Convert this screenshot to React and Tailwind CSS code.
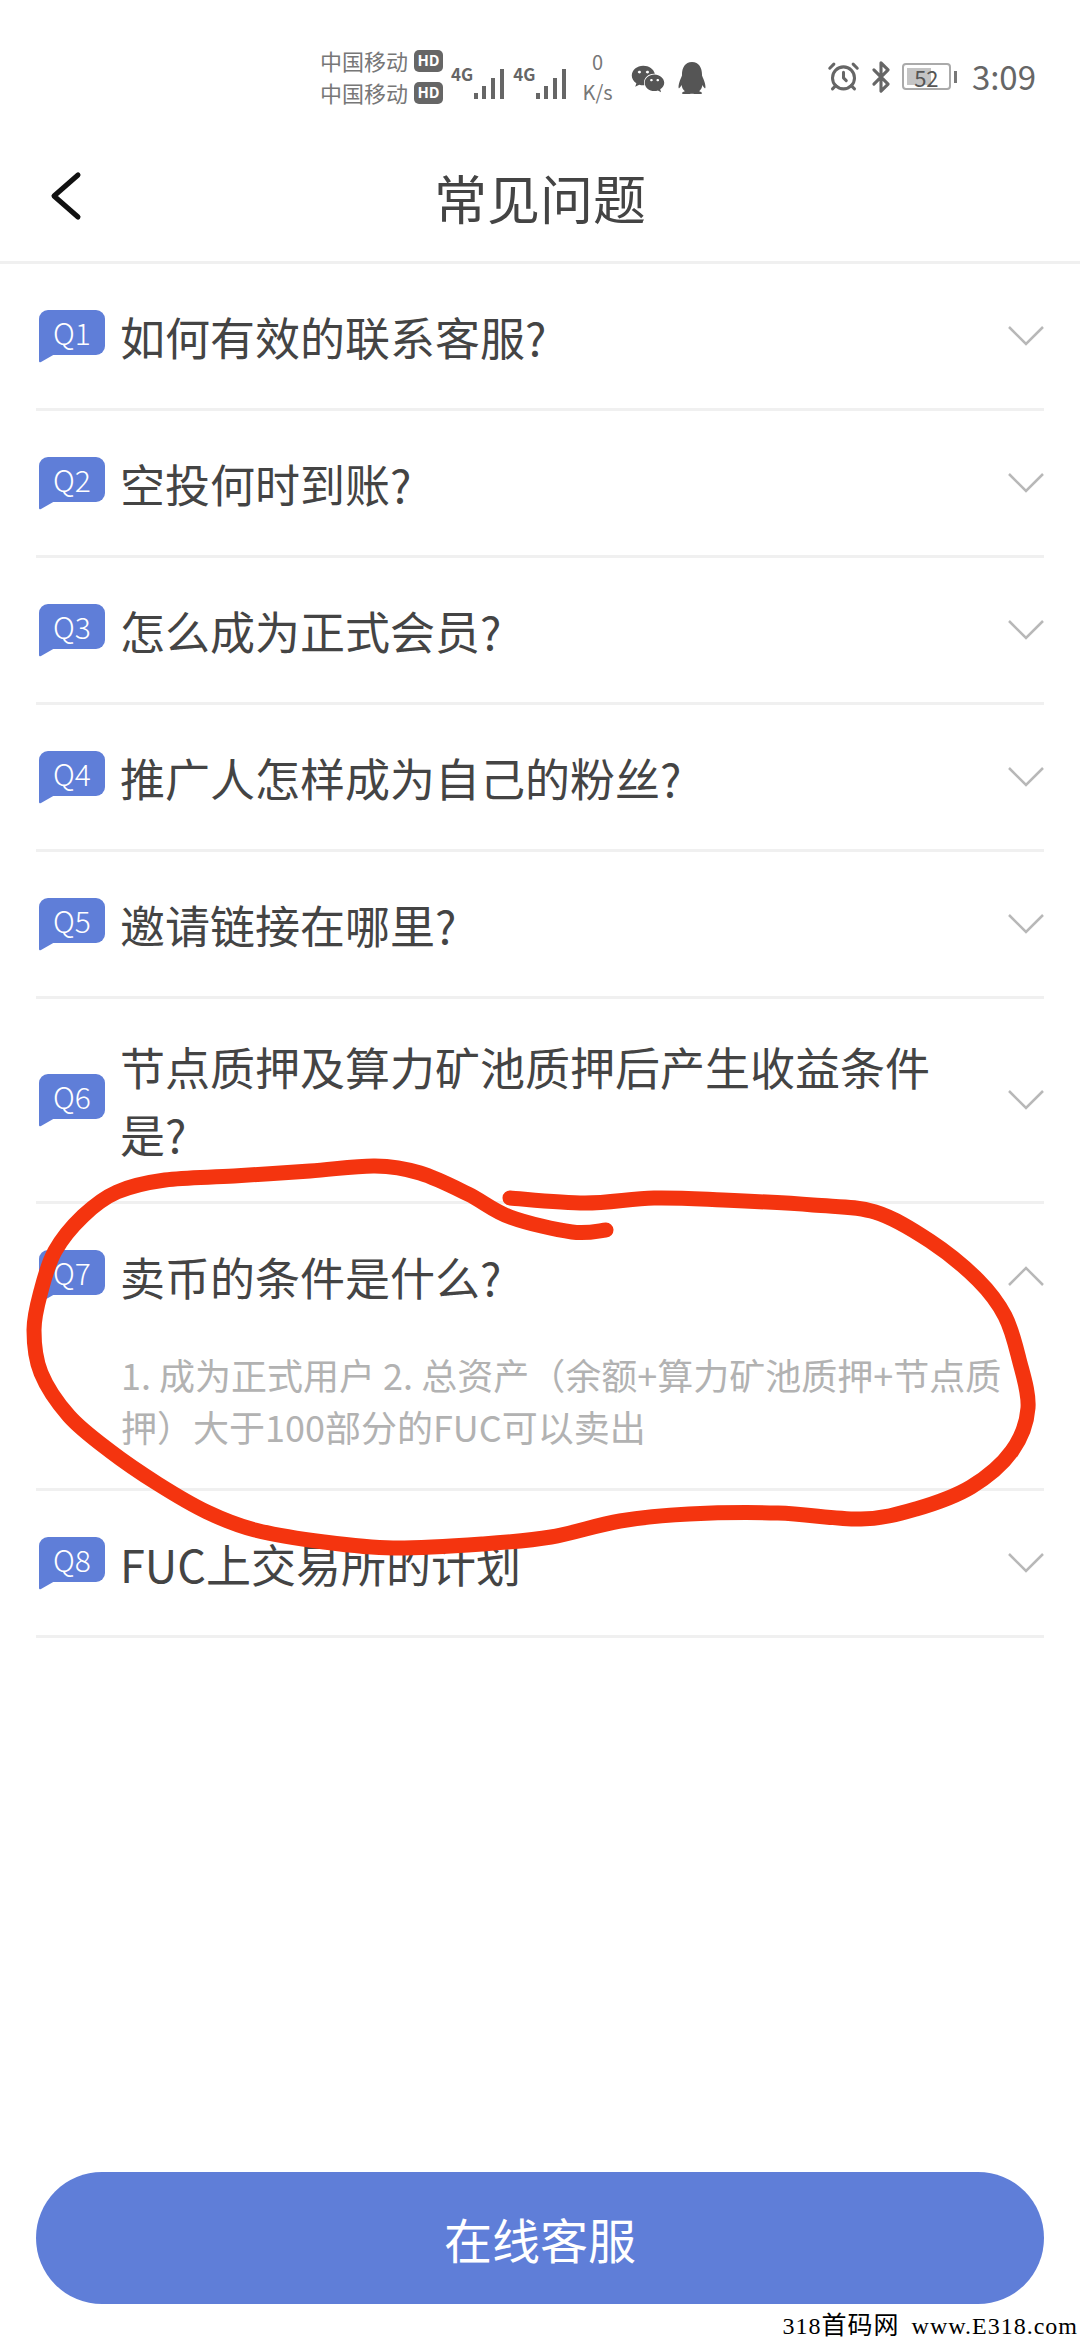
import React from 'react';
import { AlarmClock, Bluetooth } from 'lucide-react';
import { FaQq, FaWeixin } from 'react-icons/fa';

const faqs = [
  { id: 'Q1', title: '如何有效的联系客服?' },
  { id: 'Q2', title: '空投何时到账?' },
  { id: 'Q3', title: '怎么成为正式会员?' },
  { id: 'Q4', title: '推广人怎样成为自己的粉丝?' },
  { id: 'Q5', title: '邀请链接在哪里?' },
  { id: 'Q6', title: '节点质押及算力矿池质押后产生收益条件是?', tall: true },
  {
    id: 'Q7',
    title: '卖币的条件是什么?',
    answer: '1. 成为正式用户 2. 总资产（余额+算力矿池质押+节点质押）大于100部分的FUC可以卖出',
  },
  { id: 'Q8', title: 'FUC上交易所的计划' },
];

// hand drawn circle, traced from the screenshot
const scribble = [
  [606, 1230], [572, 1232], [510, 1217], [468, 1194], [420, 1173], [375, 1166], [310, 1171],
  [234, 1176], [165, 1180], [117, 1192], [83, 1216], [55, 1251], [41, 1291], [34, 1330],
  [41, 1373], [69, 1416], [110, 1451], [158, 1484], [207, 1512], [255, 1530], [324, 1542],
  [393, 1548], [482, 1544], [551, 1537], [620, 1521], [689, 1514], [778, 1513], [861, 1519],
  [916, 1509], [971, 1487], [1012, 1451], [1028, 1408], [1019, 1359], [1005, 1316], [978, 1280],
  [930, 1241], [875, 1212], [813, 1205], [723, 1200], [654, 1198], [585, 1203], [510, 1198],
];

const smoothPath = (pts) => {
  let d = `M${pts[0][0]} ${pts[0][1]}`;
  for (let i = 0; i < pts.length - 1; i++) {
    const p0 = pts[i - 1] || pts[i];
    const p1 = pts[i];
    const p2 = pts[i + 1];
    const p3 = pts[i + 2] || p2;
    d += ` C${p1[0] + (p2[0] - p0[0]) / 6} ${p1[1] + (p2[1] - p0[1]) / 6} ${p2[0] - (p3[0] - p1[0]) / 6} ${p2[1] - (p3[1] - p1[1]) / 6} ${p2[0]} ${p2[1]}`;
  }
  return d;
};

const SignalBars = () => (
  <svg width="30" height="32" viewBox="0 0 30 32" fill="#666">
    <rect x="0" y="25" width="4" height="6" />
    <rect x="8" y="18" width="4" height="13" />
    <rect x="17" y="10" width="4" height="21" />
    <rect x="26" y="1" width="4" height="30" />
  </svg>
);

const Carrier = () => (
  <div className="flex items-center gap-[6px] h-[32px]">
    <span className="text-[22px] text-[#777]">中国移动</span>
    <span className="w-[29px] h-[22px] rounded-[5px] bg-[#666] text-white text-[15px] font-bold flex items-center justify-center">HD</span>
  </div>
);

const StatusBar = () => (
  <div className="h-[131px] flex items-center pl-[320px] pr-[44px] pt-[22px] text-[#666]">
    <div className="flex flex-col">
      <Carrier />
      <Carrier />
    </div>
    <div className="flex items-end ml-[8px] mt-[8px]">
      <span className="text-[17px] font-bold mb-[14px] mr-[1px]">4G</span>
      <SignalBars />
      <span className="text-[17px] font-bold mb-[14px] ml-[9px] mr-[1px]">4G</span>
      <SignalBars />
    </div>
    <div className="flex flex-col items-center ml-[16px] text-[20px] leading-[30px] text-[#777]">
      <span>0</span>
      <span>K/s</span>
    </div>
    <FaWeixin className="ml-[18px] mt-[4px]" size={34} color="#555" />
    <FaQq className="ml-[11px] mt-[2px]" size={32} color="#555" />
    <AlarmClock className="ml-auto" size={33} strokeWidth={2.2} color="#666" />
    <Bluetooth className="ml-[4px]" size={34} strokeWidth={2.2} color="#666" />
    <div className="ml-[4px] flex items-center">
      <div className="relative w-[49px] h-[27px] border-2 border-[#aaa] rounded-[4px] flex items-center justify-center text-[22px] leading-none text-[#555]">
        <div className="absolute left-[3px] top-[3px] bottom-[3px] w-[24px] bg-[#c4c4c4]" />
        <span className="relative">52</span>
      </div>
      <div className="w-[3px] h-[12px] bg-[#777] ml-[3px]" />
    </div>
    <span className="ml-[15px] text-[33px] text-[#666]">3:09</span>
  </div>
);

const Badge = ({ id }) => (
  <div className="relative shrink-0 w-[66px] h-[45px] ml-[3px] mb-[8px] bg-[#5f7ed8] rounded-[9px] rounded-bl-none flex items-center justify-center text-white text-[30px] font-light">
    {id}
    <svg className="absolute left-0 top-[44px]" width="16" height="9" viewBox="0 0 16 9" fill="#5f7ed8">
      <path d="M0 0H16L2 8Q0 9 0 7Z" />
    </svg>
  </div>
);

const Chevron = ({ up }) => (
  <svg className="shrink-0 ml-auto" width="36" height="20" viewBox="0 0 36 20" fill="none" stroke="#b8b8b8" strokeWidth="2.5">
    <path d={up ? 'M1 19L18 2L35 19' : 'M1 1L18 18L35 1'} />
  </svg>
);

const FaqRow = ({ faq }) => {
  const open = !!faq.answer;
  return (
    <div className="border-b-[3px] border-[#f0f0f0]">
      <div className={`flex items-center ${faq.tall ? 'h-[202px]' : 'h-[144px]'}`}>
        <Badge id={faq.id} />
        <div className="w-[845px] ml-[15px] text-[45px] leading-[67px] text-[#444]">{faq.title}</div>
        <Chevron up={open} />
      </div>
      {open && (
        <div className="ml-[85px] w-[890px] pb-[36px] text-[36px] leading-[52px] text-[#b2b2b2]">
          {faq.answer}
        </div>
      )}
    </div>
  );
};

const App = () => {
  return (
    <div className="relative w-[1080px] h-[2340px] bg-white flex flex-col overflow-hidden font-['Noto_Sans_CJK_SC','Noto_Sans',sans-serif]">
      <StatusBar />

      <div className="relative h-[133px] border-b-[3px] border-[#f0f0f0] flex items-center justify-center">
        <svg className="absolute left-[48px] top-[40px]" width="36" height="50" viewBox="0 0 36 50" fill="none" stroke="#111" strokeWidth="5" strokeLinecap="round" strokeLinejoin="round">
          <path d="M30 4L6 25L30 46" />
        </svg>
        <h1 className="text-[53px] text-[#444] mt-[3px]">常见问题</h1>
      </div>

      <div className="mx-[36px] flex flex-col">
        {faqs.map((faq) => (
          <FaqRow key={faq.id} faq={faq} />
        ))}
      </div>

      <button className="mt-auto mb-[36px] mx-[36px] h-[132px] shrink-0 rounded-full bg-[#5f7ed8] text-white text-[48px]">
        在线客服
      </button>

      {/* red marker and site watermark sit on top of the page */}
      <svg className="absolute inset-0 pointer-events-none" width="1080" height="2340" fill="none">
        <path d={smoothPath(scribble)} stroke="#f4340f" strokeWidth="15" strokeLinecap="round" strokeLinejoin="round" />
      </svg>
      <div className="absolute right-[2px] bottom-0 text-[24px] leading-[28px] tracking-[1px] whitespace-nowrap text-black font-['Liberation_Serif','Noto_Sans_CJK_SC',serif]">
        318<span className="text-[25px] mr-[5px]">首码网</span> www.E318.com
      </div>
    </div>
  );
};

export default App;
